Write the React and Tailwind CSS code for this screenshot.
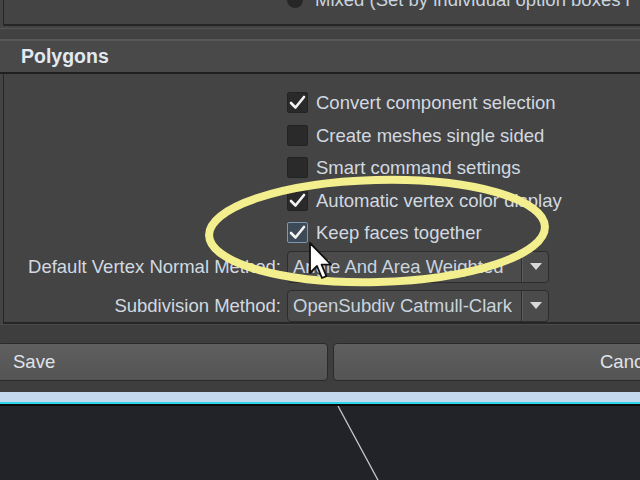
import React from "react";

const font = { fontFamily: '"Liberation Sans", Arial, sans-serif' };

const Check = ({ checked, hover }) => (
    <div
        className={
            "w-[21px] h-[21px] shrink-0 rounded-[2px] border flex items-center justify-center " +
            (hover ? "bg-[#3d4a58] border-[#7d97b3]" : "bg-[#2a2a2a] border-[#232323]")
        }
    >
        {checked && (
            <svg width="17" height="15" viewBox="0 0 17 15">
                <path d="M2 8 L6.5 12.5 L15 2" fill="none" stroke="#f4f4f4" strokeWidth="2.6" strokeLinecap="round" strokeLinejoin="round" />
            </svg>
        )}
    </div>
);

const Dropdown = ({ value }) => (
    <div className="w-[262px] h-[32px] shrink-0 flex rounded-[4px] border border-[#2c2c2c] bg-[#4b4b4b]">
        <div className="flex-1 flex items-center pl-[5px] text-[18.5px] text-[#c9d4df] border-r border-[#2f2f2f] whitespace-nowrap overflow-hidden">
            {value}
        </div>
        <div className="w-[26px] flex items-center justify-center border-l border-[#5a5a5a]">
            <svg width="12" height="8" viewBox="0 0 12 8">
                <path d="M0 0 H12 L6 7 Z" fill="#d8d8d8" />
            </svg>
        </div>
    </div>
);

const options = [
    { label: "Convert component selection", checked: true },
    { label: "Create meshes single sided", checked: false },
    { label: "Smart command settings", checked: false },
    { label: "Automatic vertex color display", checked: true },
    { label: "Keep faces together", checked: true, hover: true },
];

export default function App() {
    return (
        <div className="relative w-[640px] h-[480px] overflow-hidden bg-[#444444] flex flex-col" style={font}>
            {/* top panel, cut off */}
            <div className="h-[26px] shrink-0 ml-[3px] border-l border-b-2 border-[#262626] overflow-hidden">
                <div className="flex items-center gap-[12px] pl-[283px] -mt-[11px] h-[22px]">
                    <div className="w-[16px] h-[16px] shrink-0 rounded-full bg-[#262626]" />
                    <span className="text-[18.5px] text-[#c9d4df] whitespace-nowrap">Mixed (Set by individual option boxes i</span>
                </div>
            </div>
            <div className="h-[11px] shrink-0 border-t border-[#555555] mt-[2px] bg-[#424242]" />

            {/* section header */}
            <div className="h-[35px] shrink-0 bg-[#494949] border-t-2 border-[#595959] border-b-2 border-b-[#1f1f1f] flex items-center pl-[21px]">
                <span className="text-[19.5px] font-bold text-[#e2e9f1]">Polygons</span>
            </div>

            {/* content */}
            <div className="h-[250px] shrink-0 ml-[3px] border-l border-b-2 border-[#262626] flex flex-col pt-[18px]">
                <div className="flex flex-col pl-[283px]">
                    {options.map((o) => (
                        <div key={o.label} className="h-[32.5px] flex items-start gap-[8px]">
                            <Check checked={o.checked} hover={o.hover} />
                            <span className="text-[18.5px] leading-[21px] text-[#d2d9e0] whitespace-nowrap">{o.label}</span>
                        </div>
                    ))}
                </div>
                <div className="flex flex-col gap-[7px] -mt-[4px]">
                    <div className="flex items-center">
                        <span className="w-[283px] shrink-0 pr-[6px] text-right text-[18.5px] text-[#d2d9e0] whitespace-nowrap">Default Vertex Normal Method:</span>
                        <Dropdown value="Angle And Area Weighted" />
                    </div>
                    <div className="flex items-center">
                        <span className="w-[283px] shrink-0 pr-[6px] text-right text-[18.5px] text-[#d2d9e0] whitespace-nowrap">Subdivision Method:</span>
                        <Dropdown value="OpenSubdiv Catmull-Clark" />
                    </div>
                </div>
            </div>

            {/* button strip */}
            <div className="h-[68px] shrink-0 bg-[#3e3e3e] border-t border-[#4a4a4a] flex items-end pb-[11px] gap-[5px]">
                <div className="w-[331px] shrink-0 -ml-[3px] h-[38px] rounded-[4px] border border-[#2a2a2a] bg-gradient-to-b from-[#5f5f5f] to-[#545454] flex items-center pl-[15px]">
                    <span className="text-[18.5px] text-[#e0e4e8]">Save</span>
                </div>
                <div className="w-[330px] shrink-0 h-[38px] rounded-[4px] border border-[#2a2a2a] bg-gradient-to-b from-[#5f5f5f] to-[#545454] flex items-center pl-[266px]">
                    <span className="text-[18.5px] text-[#e0e4e8] whitespace-nowrap">Cancel</span>
                </div>
            </div>

            {/* viewport */}
            <div className="h-[10px] shrink-0 bg-[#c4d8ee]" />
            <div className="h-[2px] shrink-0 bg-[#2fd3ea]" />
            <div className="h-[2px] shrink-0 bg-[#0a0a0a]" />
            <div className="flex-1 bg-[#212328]">
                <svg width="640" height="80" viewBox="0 0 640 80">
                    <path d="M338 0 L379 76" stroke="#c8c8c8" strokeWidth="1.3" fill="none" />
                </svg>
            </div>

            {/* annotation ellipse */}
            <svg className="absolute left-0 top-0 pointer-events-none" width="640" height="480" viewBox="0 0 640 480">
                <ellipse cx="377" cy="231" rx="168" ry="51" transform="rotate(-1.5 377 231)" fill="none" stroke="#f3ef8e" strokeWidth="8" />
            </svg>

            {/* mouse cursor */}
            <svg className="absolute left-[308px] top-[241px]" width="24" height="40" viewBox="0 0 12 20">
                <path d="M1 1 L1 16 L4.5 12.5 L7 18.5 L9.2 17.6 L6.8 11.8 L11.5 11.8 Z" fill="#ffffff" stroke="#111111" strokeWidth="0.9" strokeLinejoin="round" />
            </svg>
        </div>
    );
}
